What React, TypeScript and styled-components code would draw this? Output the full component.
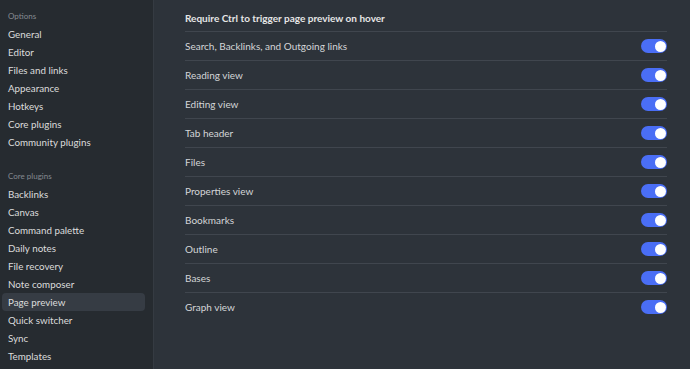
import React from "react";
import styled, { createGlobalStyle } from "styled-components";

const GlobalStyle = createGlobalStyle`
  html, body {
    margin: 0;
    padding: 0;
    background: #2d333a;
    font-family: Lato, "Open Sans", sans-serif;
    -webkit-font-smoothing: antialiased;
  }
`;

const StyledRoot = styled.div`
  display: flex;
  width: 690px;
  height: 369px;
  overflow: hidden;
`;

const StyledSidebar = styled.nav`
  width: 154px;
  flex-shrink: 0;
  background: #262b30;
  border-right: 1px solid #353b42;
  padding: 9px 8px 0 2px;
  box-sizing: border-box;
`;

const StyledGroupTitle = styled.div`
  font-size: 8px;
  color: #858a91;
  padding: 0 6px;
  height: 14px;
  line-height: 14px;
  margin-bottom: 2px;
`;

const StyledGroup = styled.div`
  margin-bottom: 18px;
`;

const StyledNavItem = styled.div<{ $active?: boolean }>`
  height: 18px;
  line-height: 18px;
  padding: 0 6px;
  font-size: 9.8px;
  color: #dcdcdc;
  border-radius: 4px;
  background: ${(p) => (p.$active ? "#363c44" : "transparent")};
  white-space: nowrap;
`;

const StyledMain = styled.main`
  flex: 1;
  padding: 9px 23px 0 31px;
`;

const StyledHeading = styled.div`
  font-size: 10px;
  font-weight: 700;
  color: #e6e6e6;
  height: 22px;
  line-height: 18px;
  border-bottom: 1px solid #40464e;
`;

const StyledRow = styled.div`
  display: flex;
  align-items: center;
  justify-content: space-between;
  height: 28px;
  font-size: 10px;
  color: #d4d6d8;
  border-bottom: 1px solid #40464e;

  &:last-child {
    border-bottom: none;
  }
`;

const StyledToggle = styled.div<{ $on?: boolean }>`
  width: 26px;
  height: 14px;
  border-radius: 7px;
  background: ${(p) => (p.$on ? "#4a6ef5" : "#50565e")};
  position: relative;

  &::after {
    content: "";
    position: absolute;
    top: 1.5px;
    left: ${(p) => (p.$on ? "13.5px" : "1.5px")};
    width: 11px;
    height: 11px;
    border-radius: 50%;
    background: #ffffff;
  }
`;

const options = [
  "General",
  "Editor",
  "Files and links",
  "Appearance",
  "Hotkeys",
  "Core plugins",
  "Community plugins",
];

const corePlugins = [
  "Backlinks",
  "Canvas",
  "Command palette",
  "Daily notes",
  "File recovery",
  "Note composer",
  "Page preview",
  "Quick switcher",
  "Sync",
  "Templates",
];

const previewSources = [
  "Search, Backlinks, and Outgoing links",
  "Reading view",
  "Editing view",
  "Tab header",
  "Files",
  "Properties view",
  "Bookmarks",
  "Outline",
  "Bases",
  "Graph view",
];

export default function App() {
  return (
    <StyledRoot>
      <GlobalStyle />
      <StyledSidebar>
        <StyledGroup>
          <StyledGroupTitle>Options</StyledGroupTitle>
          {options.map((o) => (
            <StyledNavItem key={o}>{o}</StyledNavItem>
          ))}
        </StyledGroup>
        <StyledGroup>
          <StyledGroupTitle>Core plugins</StyledGroupTitle>
          {corePlugins.map((o) => (
            <StyledNavItem key={o} $active={o === "Page preview"}>
              {o}
            </StyledNavItem>
          ))}
        </StyledGroup>
      </StyledSidebar>
      <StyledMain>
        <StyledHeading>Require Ctrl to trigger page preview on hover</StyledHeading>
        {previewSources.map((s) => (
          <StyledRow key={s}>
            {s}
            <StyledToggle $on />
          </StyledRow>
        ))}
      </StyledMain>
    </StyledRoot>
  );
}
